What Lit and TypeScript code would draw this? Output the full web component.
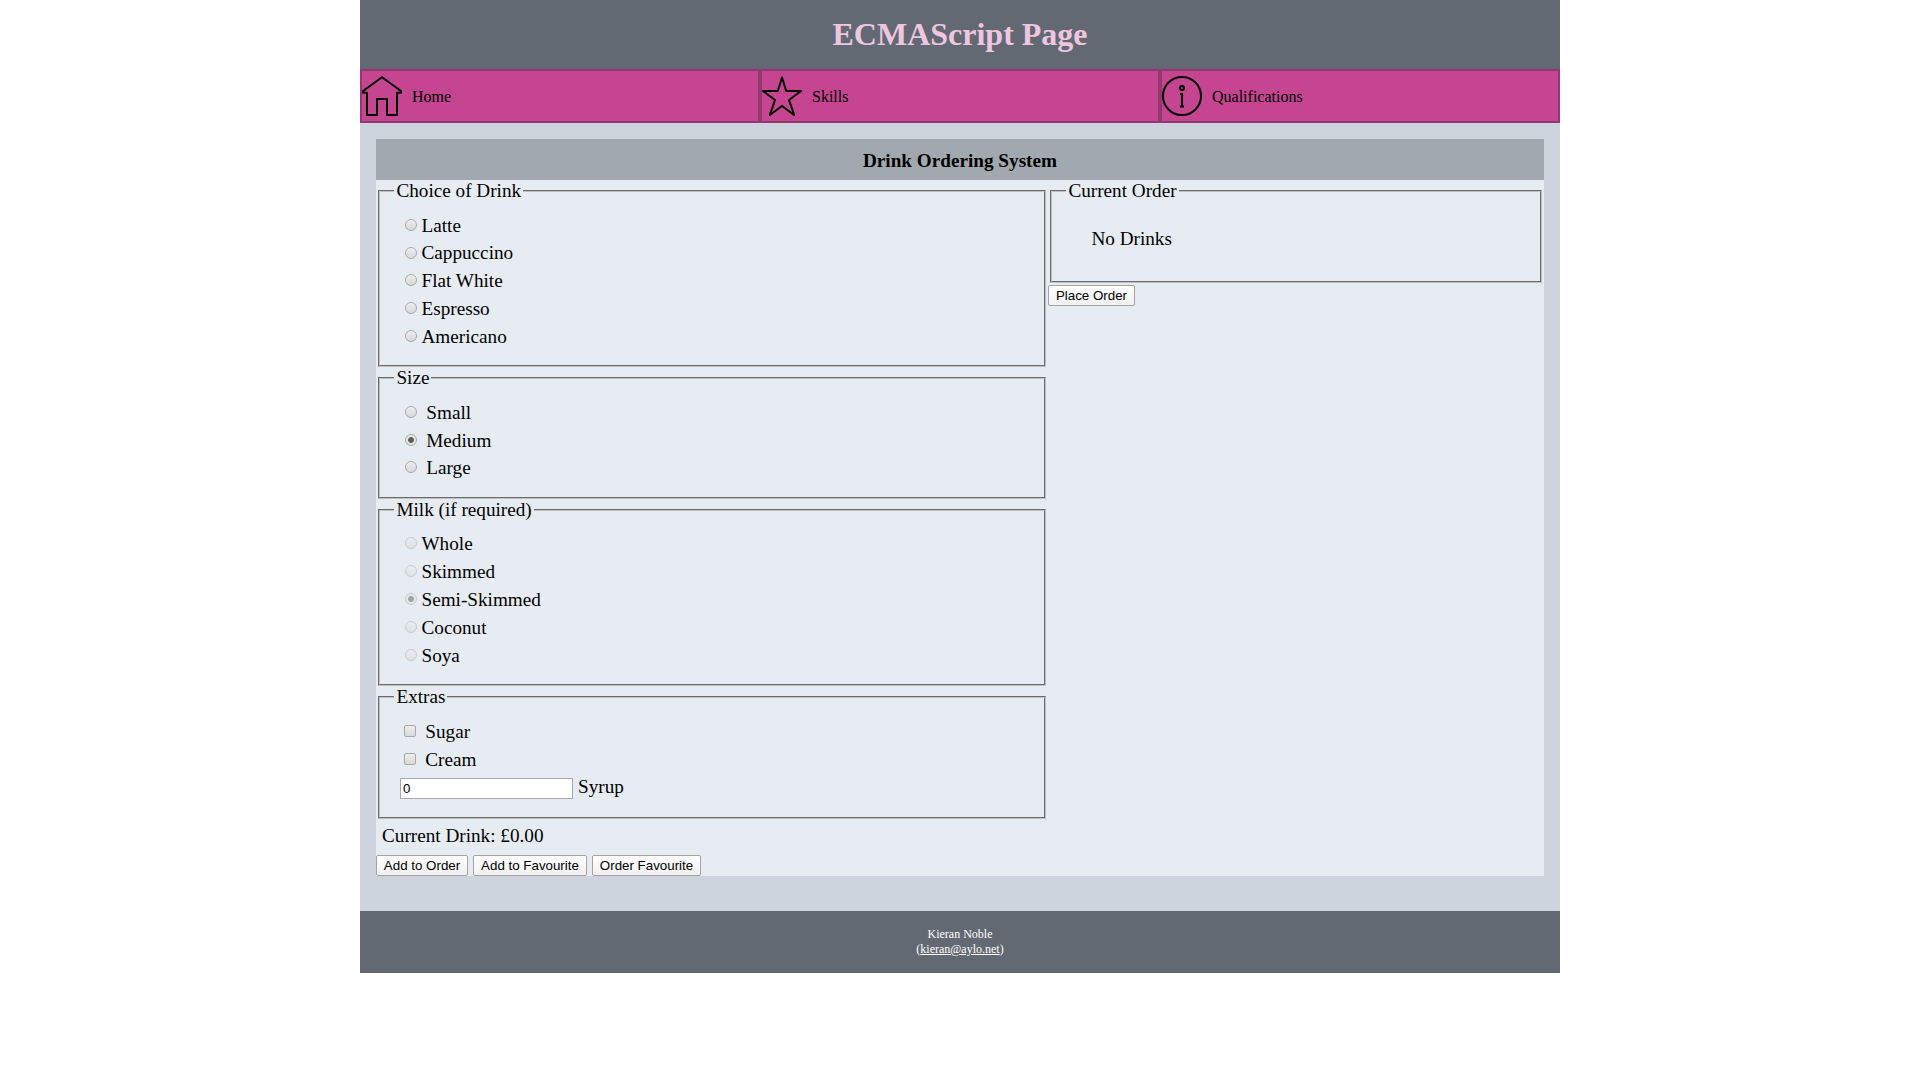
import { LitElement, html, css, svg } from "lit";
import { customElement } from "lit/decorators.js";

const NAV = [
  { label: "Home", icon: svg`<path d="M20 1.2 L1 15 V16.8 H5 V39 H15 V23 H25 V39 H35 V16.8 H39 V15 Z"/>` },
  {
    label: "Skills",
    icon: svg`<path d="M20 1.5 L24.2 15 H39 L27 24 L32.2 39 L20 30 L7.8 39 L13 24 L1 15 H15.8 Z"/>`,
  },
  {
    label: "Qualifications",
    icon: svg`<circle cx="20" cy="20" r="19"/><circle cx="20" cy="12" r="2"/><path d="M18 18 H21 M20 18 V30.5 M18 30.5 H22"/>`,
  },
];

const DRINKS = ["Latte", "Cappuccino", "Flat White", "Espresso", "Americano"];
const SIZES = ["Small", "Medium", "Large"];
const MILKS = ["Whole", "Skimmed", "Semi-Skimmed", "Coconut", "Soya"];
const EXTRAS = ["Sugar", "Cream"];

@customElement("app-root")
export class AppRoot extends LitElement {
  static styles = css`
    :host {
      display: block;
      width: 1200px;
      margin: 0 auto;
      font: 19.2px "Liberation Serif", "Times New Roman", serif;
      color: #000;
    }
    header {
      box-sizing: border-box;
      height: 69px;
      padding-top: 16px;
      background: #626973;
    }
    h1 {
      margin: 0;
      font-size: 32px;
      line-height: 37px;
      text-align: center;
      color: #eec6e0;
    }
    nav {
      display: grid;
      grid-template-columns: repeat(3, 1fr);
    }
    .tab {
      box-sizing: border-box;
      height: 54px;
      display: flex;
      align-items: center;
      gap: 10px;
      border: 2px solid #94366f;
      background: #c64591;
      font-size: 16px;
      line-height: 18px;
      color: #000;
      text-decoration: none;
    }
    .tab svg {
      width: 40px;
      height: 40px;
      fill: none;
      stroke: #000;
      stroke-width: 2;
      stroke-linejoin: round;
    }
    .tab span {
      padding-top: 2px;
    }
    main {
      padding: 16px 16px 35px;
      background: #cdd4de;
    }
    h2 {
      margin: 0;
      height: 41px;
      font-size: 19.2px;
      line-height: 43px;
      text-align: center;
      background: #a2a8af;
    }
    .panel {
      display: grid;
      grid-template-columns: 672px 496px;
      height: 696px;
      background: #e7ecf3;
    }
    .column {
      display: flex;
      flex-direction: column;
    }
    fieldset {
      box-sizing: border-box;
      margin: 0 2px;
      padding: 9.6px 14.4px 14.4px 20px;
      border: 2px groove #c0c0c0;
      min-width: 0;
    }
    legend {
      margin-left: -5.6px;
      padding: 0 2px;
      line-height: 22px;
    }
    .row {
      display: flex;
      height: 27.84px;
      line-height: 27.84px;
      align-items: flex-start;
      white-space: pre;
    }
    input,
    button {
      box-sizing: border-box;
      appearance: none;
      font: 13.333px "Liberation Sans", Arial, sans-serif;
      color: #000;
    }
    .radio {
      width: 12px;
      height: 12px;
      margin: 7.1px 4.5px 0 5px;
      border: 1px solid #a8a8a8;
      border-radius: 50%;
      background: linear-gradient(#ededed, #d9d9d9);
      box-shadow: inset 0 1px 1px #fff6;
    }
    .radio:checked {
      background: radial-gradient(circle, #5c5c5c 2.5px, #e4e4e4 3.3px);
    }
    .radio:disabled {
      opacity: 0.5;
    }
    .spaced .radio {
      margin-right: 9.3px;
    }
    .check {
      width: 12px;
      height: 12px;
      margin: 6.7px 9.3px 0 4px;
      border: 1px solid #a8a8a8;
      border-radius: 2px;
      background: linear-gradient(#ededed, #d9d9d9);
    }
    .syrup {
      width: 173px;
      height: 21px;
      margin: 4px 5px 0 0;
      padding: 1px 2px;
      border: 1px solid #a9a9a9;
      border-radius: 0;
      background: #fff;
    }
    .syrup + span {
      line-height: 26.4px;
    }
    .extras {
      height: 133px;
      padding-top: 10.3px;
    }
    .total {
      padding-left: 6px;
      height: 36px;
      line-height: 33.6px;
    }
    .actions {
      display: flex;
      gap: 5px;
    }
    button {
      height: 21px;
      padding: 0;
      border: 1px solid #a3a3a3;
      border-radius: 2px;
      background: linear-gradient(#fff, #f1f1f1);
      line-height: 19px;
      text-align: center;
      white-space: nowrap;
    }
    .add {
      width: 92px;
    }
    .favourite {
      width: 114px;
    }
    .order-favourite {
      width: 109px;
    }
    .place {
      width: 87px;
      margin-top: 2px;
    }
    .order {
      height: 103px;
    }
    .empty {
      margin: 0;
      padding: 13px 0 0 19.4px;
      line-height: 27.84px;
    }
    footer {
      box-sizing: border-box;
      height: 62px;
      padding-top: 16px;
      font-size: 12px;
      line-height: 15px;
      text-align: center;
      color: #fff;
      background: #626973;
    }
    footer a {
      color: inherit;
    }
  `;

  private radios(group: string, names: string[], checked = -1, disabled = false) {
    return names.map(
      (name, i) => html`<label class="row"
        ><input class="radio" type="radio" name=${group} .checked=${i === checked} ?disabled=${disabled} /><span>${name}</span></label
      >`
    );
  }

  render() {
    return html`
      <header><h1>ECMAScript Page</h1></header>
      <nav>
        ${NAV.map((n) => html`<a class="tab"><svg viewBox="0 0 40 40">${n.icon}</svg><span>${n.label}</span></a>`)}
      </nav>
      <main>
        <h2>Drink Ordering System</h2>
        <div class="panel">
          <div class="column">
            <fieldset>
              <legend>Choice of Drink</legend>
              ${this.radios("drink", DRINKS)}
            </fieldset>
            <fieldset class="spaced">
              <legend>Size</legend>
              ${this.radios("size", SIZES, 1)}
            </fieldset>
            <fieldset>
              <legend>Milk (if required)</legend>
              ${this.radios("milk", MILKS, 2, true)}
            </fieldset>
            <fieldset class="extras">
              <legend>Extras</legend>
              ${EXTRAS.map(
                (name) => html`<label class="row"><input class="check" type="checkbox" /><span>${name}</span></label>`
              )}
              <label class="row"><input class="syrup" type="text" value="0" /><span>Syrup</span></label>
            </fieldset>
            <div class="total">Current Drink: £0.00</div>
            <div class="actions">
              <button class="add">Add to Order</button>
              <button class="favourite">Add to Favourite</button>
              <button class="order-favourite">Order Favourite</button>
            </div>
          </div>
          <div class="column">
            <fieldset class="order">
              <legend>Current Order</legend>
              <p class="empty">No Drinks</p>
            </fieldset>
            <button class="place">Place Order</button>
          </div>
        </div>
      </main>
      <footer>Kieran Noble<br />(<a href="#">kieran@aylo.net</a>)</footer>
    `;
  }
}
